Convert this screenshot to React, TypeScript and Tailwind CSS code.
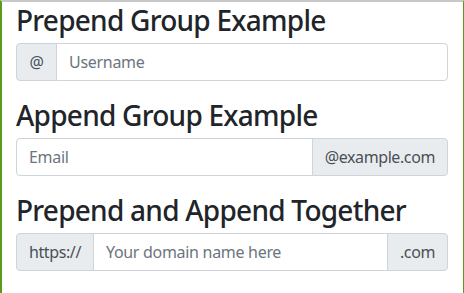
import React from 'react';

function Addon({ children, side, extra = '' }: { children: React.ReactNode; side: 'left' | 'right'; extra?: string }) {
  return (
    <span
      className={`flex items-center px-3 bg-[#e9ecef] text-[#495057] text-[16px] tracking-[-0.4px] border border-[#ced4da] ${
        side === 'left' ? 'rounded-l-[4px] -mr-px' : 'rounded-r-[4px] -ml-px'
      } ${extra}`}
    >
      {children}
    </span>
  );
}

function Field({ placeholder, rounded }: { placeholder: string; rounded: string }) {
  return (
    <input
      placeholder={placeholder}
      className={`flex-1 min-w-0 h-[38px] px-3 text-[16px] tracking-[-0.3px] text-[#495057] placeholder:text-[#6c757d] bg-white border border-[#ced4da] outline-none ${rounded}`}
    />
  );
}

const heading = 'text-[28px] leading-[33px] font-medium text-[#212529] pt-[2px] mb-[6px] tracking-[-0.75px]';

export default function App() {
  return (
    <div
      className="h-[293px] w-[464px] bg-white border-l-2 border-r border-t-2 border-l-[#5a9a1a] border-r-[#5a9a1a] border-t-[#c8c8c8] pl-[14px] pr-[15px]"
      style={{ fontFamily: '"Noto Sans", "Open Sans", sans-serif' }}
    >
      <h3 className={heading}>Prepend Group Example</h3>
      <div className="flex h-[38px] mb-4">
        <Addon side="left" extra="w-[41px] justify-center">@</Addon>
        <Field placeholder="Username" rounded="rounded-r-[4px]" />
      </div>

      <h3 className={heading}>Append Group Example</h3>
      <div className="flex h-[38px] mb-4">
        <Field placeholder="Email" rounded="rounded-l-[4px]" />
        <Addon side="right">@example.com</Addon>
      </div>

      <h3 className={heading}>Prepend and Append Together</h3>
      <div className="flex h-[38px]">
        <Addon side="left">https://</Addon>
        <Field placeholder="Your domain name here" rounded="" />
        <Addon side="right">.com</Addon>
      </div>
    </div>
  );
}
